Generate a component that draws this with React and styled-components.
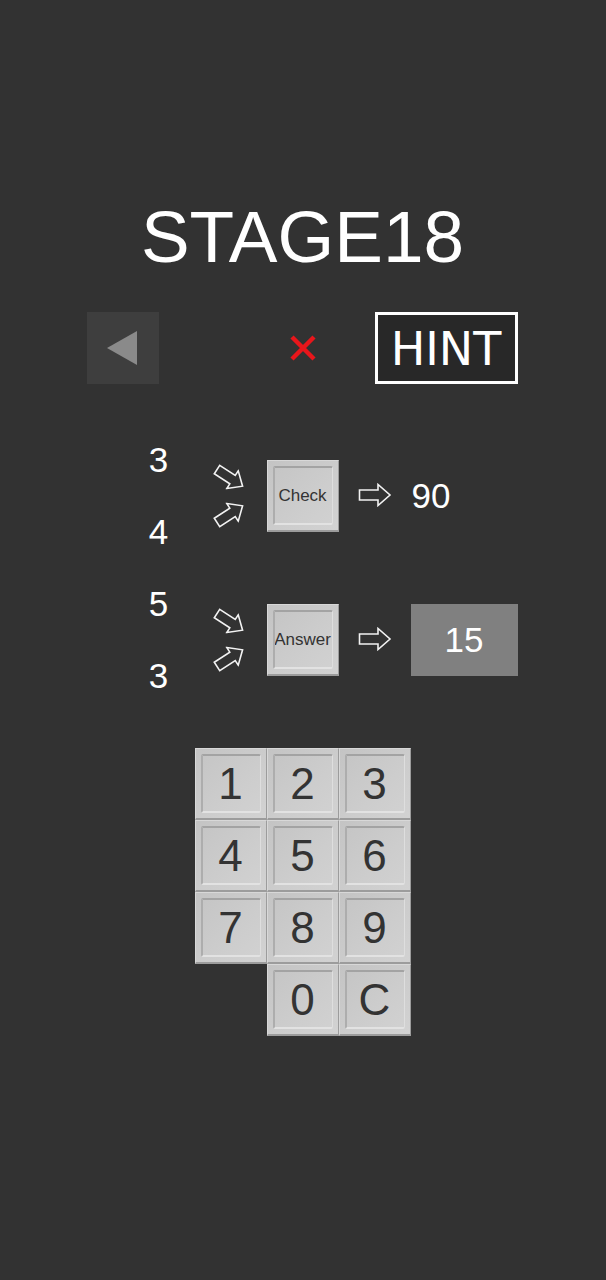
import styled, { createGlobalStyle } from "styled-components";

const Global = createGlobalStyle`
  html, body {
    margin: 0;
    padding: 0;
    background: #323232;
  }
  body {
    font-family: "Liberation Sans", Arial, sans-serif;
  }
`;

const pairs = [
  { top: "3", bottom: "4", label: "Check", result: "90", boxed: false },
  { top: "5", bottom: "3", label: "Answer", result: "15", boxed: true },
];

const keys = ["1", "2", "3", "4", "5", "6", "7", "8", "9", "", "0", "C"];

function Arrow({ angle }) {
  return (
    <ArrowSvg width="34" height="24" viewBox="0 0 34 24" style={{ transform: `rotate(${angle}deg)` }}>
      <path
        d="M1.5 7 H20 V1.5 L32 12 L20 22.5 V17 H1.5 Z"
        fill="none"
        stroke="#f2f2f2"
        strokeWidth="1.6"
        strokeLinejoin="miter"
      />
    </ArrowSvg>
  );
}

export default function App() {
  return (
    <>
      <Global />
      <Page>
        <Title>STAGE18</Title>
        <Column>
          <NavRow>
            <BackButton>
              <svg width="32" height="36" viewBox="0 0 32 36">
                <polygon points="31,1 31,35 1,18" fill="#8a8a8a" />
              </svg>
            </BackButton>
            <Mark>
              <svg width="28" height="28" viewBox="0 0 28 28">
                <path d="M3 3 L25 25 M25 3 L3 25" stroke="#e8161b" strokeWidth="4.5" />
              </svg>
            </Mark>
            <HintButton>HINT</HintButton>
          </NavRow>

          <Puzzle>
            {pairs.map((p) => (
              <Pair key={p.label}>
                <Num $row={1}>{p.top}</Num>
                <Num $row={3}>{p.bottom}</Num>
                <ArrowCell $row={2}><Arrow angle={33} /></ArrowCell>
                <ArrowCell $row={3}><Arrow angle={-33} /></ArrowCell>
                <OpButton>{p.label}</OpButton>
                <ResultArrow><Arrow angle={0} /></ResultArrow>
                <Result $boxed={p.boxed}>{p.result}</Result>
              </Pair>
            ))}
          </Puzzle>

          <Keypad>
            {keys.map((k, i) =>
              k ? <Key key={i}>{k}</Key> : <Blank key={i} />
            )}
          </Keypad>
        </Column>
      </Page>
    </>
  );
}

const Page = styled.div`
  width: 606px;
  min-height: 1280px;
  background: #323232;
  display: flex;
  flex-direction: column;
  align-items: center;
  padding-top: 197px;
  box-sizing: border-box;
`;

const Title = styled.h1`
  margin: 0;
  height: 80px;
  line-height: 80px;
  font-size: 73px;
  font-weight: 400;
  color: #ffffff;
  text-align: center;
  margin-left: -1px;
`;

const Column = styled.div`
  width: 432px;
  margin-left: -1px;
  display: flex;
  flex-direction: column;
`;

const NavRow = styled.div`
  margin-top: 35px;
  display: grid;
  grid-template-columns: repeat(6, 72px);
  height: 72px;
`;

const BackButton = styled.div`
  grid-column: 1 / 2;
  background: #3e3e3e;
  display: flex;
  align-items: center;
  justify-content: center;
  padding-right: 2px;
`;

const Mark = styled.div`
  grid-column: 3 / 5;
  display: flex;
  align-items: center;
  justify-content: center;
`;

const HintButton = styled.div`
  grid-column: 5 / 7;
  width: 143px;
  box-sizing: border-box;
  border: 3px solid #ffffff;
  background: #282828;
  color: #ffffff;
  font-family: "DejaVu Sans", "Liberation Sans", sans-serif;
  font-size: 46px;
  display: flex;
  align-items: center;
  justify-content: center;
  padding-top: 2px;
`;

const Puzzle = styled.div`
  margin-top: 40px;
  margin-left: 36px;
  display: flex;
  flex-direction: column;
`;

const Pair = styled.div`
  display: grid;
  grid-template-columns: 72px 72px 72px 72px 108px;
  grid-template-rows: repeat(4, 36px);
`;

const Num = styled.div`
  grid-column: 1;
  grid-row: ${(p) => p.$row} / span 2;
  display: flex;
  align-items: center;
  justify-content: center;
  color: #ffffff;
  font-size: 35px;
`;

const ArrowCell = styled.div`
  grid-column: 2;
  grid-row: ${(p) => p.$row};
  display: flex;
  align-items: center;
  justify-content: center;
  padding-right: 2px;
`;

const ArrowSvg = styled.svg`
  display: block;
`;

const bevel = `
  position: relative;
  box-sizing: border-box;
  background: linear-gradient(135deg, #c4c4c4 0%, #cdcdcd 60%, #d2d2d2 100%);
  border-top: 1px solid #d8d8d8;
  border-left: 1px solid #d8d8d8;
  border-right: 1px solid #9c9c9c;
  border-bottom: 2px solid #9c9c9c;
  color: #333333;
  display: flex;
  align-items: center;
  justify-content: center;

  &::before {
    content: "";
    position: absolute;
    top: 5px;
    left: 5px;
    right: 5px;
    bottom: 5px;
    border-top: 2px solid #a3a3a3;
    border-left: 2px solid #adadad;
    border-right: 1px solid #dedede;
    border-bottom: 2px solid #e2e2e2;
    border-radius: 2px;
    pointer-events: none;
  }
`;

const OpButton = styled.div`
  ${bevel}
  grid-column: 3;
  grid-row: 2 / span 2;
  font-size: 17px;
`;

const ResultArrow = styled.div`
  grid-column: 4;
  grid-row: 2 / span 2;
  display: flex;
  align-items: center;
  justify-content: center;
  padding-bottom: 2px;
`;

const Result = styled.div`
  grid-column: 5;
  grid-row: 2 / span 2;
  width: 107px;
  display: flex;
  align-items: center;
  justify-content: ${(p) => (p.$boxed ? "center" : "flex-start")};
  padding-left: ${(p) => (p.$boxed ? "0" : "1px")};
  background: ${(p) => (p.$boxed ? "#808080" : "transparent")};
  color: #ffffff;
  font-size: 35px;
`;

const Keypad = styled.div`
  margin-top: 36px;
  margin-left: 108px;
  display: grid;
  grid-template-columns: repeat(3, 72px);
  grid-auto-rows: 72px;
`;

const Key = styled.div`
  ${bevel}
  font-size: 44px;
`;

const Blank = styled.div``;
